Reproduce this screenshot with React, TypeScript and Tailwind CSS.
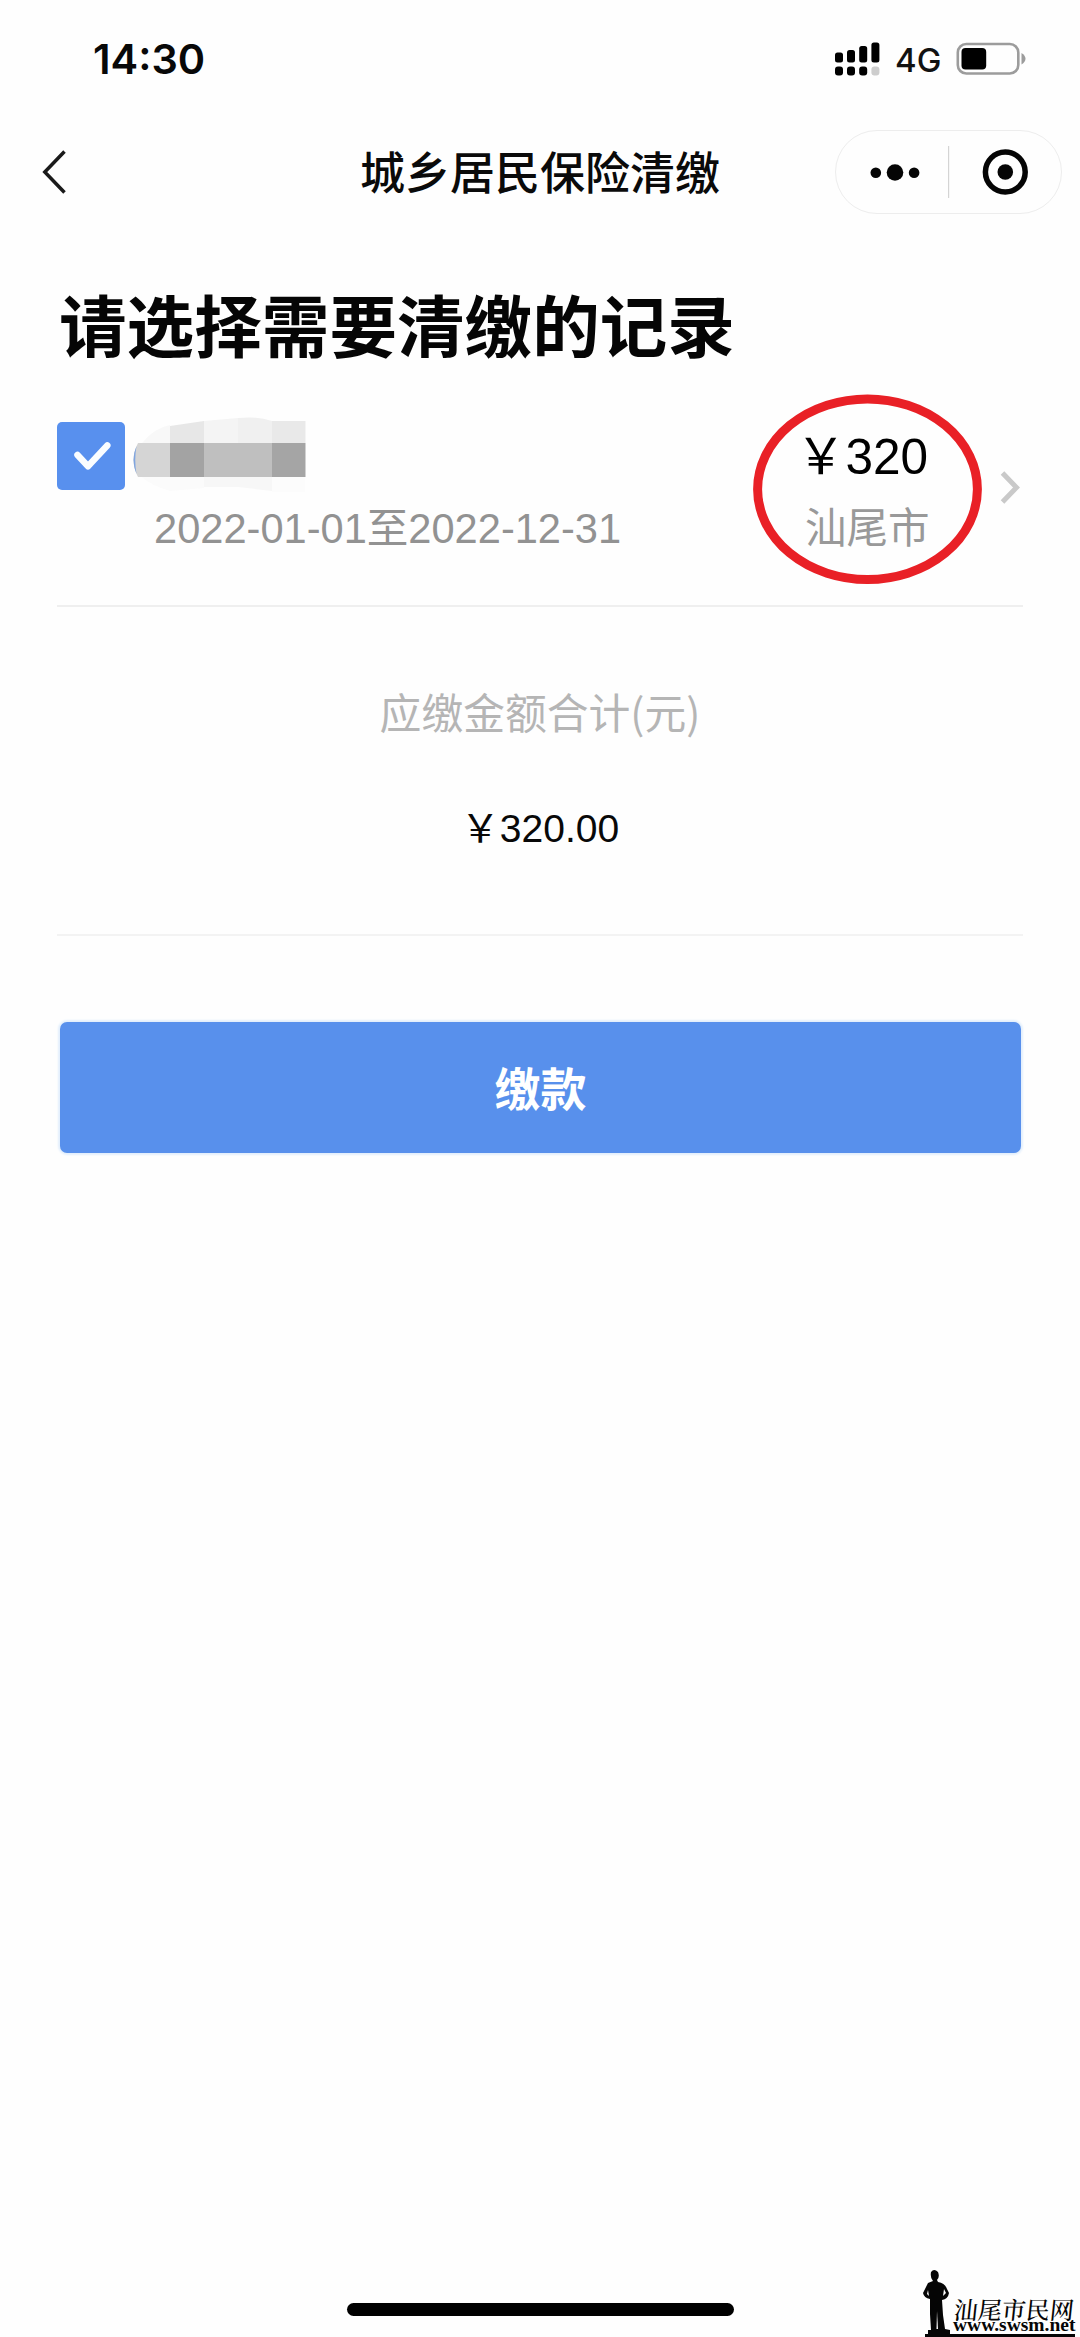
const sans = "font-['Liberation_Sans','Noto_Sans_CJK_SC',sans-serif]";

// Full-width yen sign, one em wide, as used by Chinese price labels.
const YEN = "\uFFE5";

function StatusBar() {
  return (
    <div className="flex h-[118px] items-center pl-[93px] pr-[54px]">
      <span className="pt-[2px] font-['Inter',sans-serif] text-[41.500px] font-semibold leading-none text-[#080808]">14:30</span>
      <div className="ml-auto flex items-center">
        <svg className="h-[34px] w-[46px]" viewBox="0 0 46 34" fill="#000">
          <rect x="1" y="10.5" width="8" height="10" rx="2.5" />
          <rect x="13" y="8" width="8" height="12.5" rx="2.5" />
          <rect x="25.2" y="4" width="8" height="16.5" rx="2.5" />
          <rect x="37.4" y="0.5" width="8" height="20" rx="2.5" />
          <rect x="1" y="24.5" width="8" height="9" rx="3" />
          <rect x="13" y="24.5" width="8" height="9" rx="3" />
          <rect x="25.2" y="24.5" width="8" height="9" rx="3" />
          <rect x="37.4" y="24.5" width="8" height="9" rx="3" fill="#cdcdcd" />
        </svg>
        <span className="ml-[15px] w-[46px] whitespace-nowrap pt-[2px] font-['Inter',sans-serif] text-[33px] font-medium leading-none text-[#111]">4G</span>
        <svg className="ml-[15px] h-[34px] w-[70px]" viewBox="0 0 70 34">
          <rect x="1.8" y="2" width="60.5" height="29.5" rx="8.5" fill="none" stroke="#9c9c9c" strokeWidth="2.6" />
          <rect x="5.5" y="6" width="24.7" height="21.5" rx="4" />
          <path d="M65.5 11Q69.5 13.5 69.5 16.7Q69.5 20 65.5 22.5Z" fill="#9c9c9c" />
        </svg>
      </div>
    </div>
  );
}

function NavBar() {
  return (
    <header className="grid h-[108px] grid-cols-[300px_1fr_300px] items-center">
      <svg className="ml-[40px] h-[48px] w-[30px]" viewBox="0 0 30 48" fill="none" stroke="#1a1a1a" strokeWidth="3.5">
        <path d="M24.500 3.500 4.800 24 24.500 44.500" />
      </svg>
      <h1 className="pt-[5px] text-center text-[45px] font-medium leading-none text-[#0a0a0a]">城乡居民保险清缴</h1>
      <div className="ml-[55px] flex h-[84px] w-[227px] items-center rounded-full border-[1.500px] border-[#ededed]">
        <svg className="h-[52px] w-full" viewBox="0 0 224 52" fill="#050505">
          <circle cx="39.3" cy="26.7" r="5.3" />
          <circle cx="58.5" cy="26.5" r="8.3" />
          <circle cx="77.6" cy="26.7" r="5.3" />
          <rect x="111.5" y="0" width="1.2" height="52" fill="#d4d4d4" />
          <circle cx="168.8" cy="26" r="19.9" fill="none" stroke="#050505" strokeWidth="5.5" />
          <circle cx="168.8" cy="26" r="7.8" />
        </svg>
      </div>
    </header>
  );
}

function RedactedName() {
  return (
    <svg className="ml-[7px] h-[80px] w-[174px]" viewBox="0 0 174 80">
      <path d="M10 27 Q22 12 38 9V27Z" fill="#f8f8f8" />
      <path d="M38 10 72 5V27H38Z" fill="#e7e7e7" />
      <path d="M72 5 106 2V27H72Z" fill="#f4f4f4" />
      <path d="M106 2 Q126 0 140 5V27H106Z" fill="#f0f0f0" />
      <rect x="140" y="5" width="33.5" height="22" fill="#e9e9e9" />
      <path d="M6 27H38V61H6Q-3 44 6 27Z" fill="#d5d5d5" />
      <path d="M4.500 30Q-1.500 44 4.500 58Q2 44 4.500 30Z" fill="#7fa5e0" />
      <rect x="38" y="27" width="34" height="34" fill="#a3a3a3" />
      <rect x="72" y="27" width="68" height="34" fill="#bfbfbf" />
      <rect x="140" y="27" width="33.5" height="34" fill="#a5a5a5" />
      <path d="M10 61H72V72L38 75Q20 70 10 61Z" fill="#fbfbfb" />
      <path d="M72 61H140V75L106 71H72Z" fill="#f7f7f7" />
      <path d="M140 61H173V76H140Z" fill="#fcfcfc" />
    </svg>
  );
}

function RecordRow() {
  return (
    <section className="flex h-[215px] border-b-2 border-[#efefef]">
      <div className="flex-1 pt-[24px]">
        <div className="flex h-[80px] items-center">
          <div className="flex size-[68px] items-center justify-center rounded-[5px] bg-[#5890ee]">
            <svg className="size-[68px]" viewBox="0 0 68 68" fill="none" stroke="#fafdff" strokeWidth="6.5" strokeLinecap="round" strokeLinejoin="round">
              <path d="M20.500 33 31 44.300 50.300 23.500" />
            </svg>
          </div>
          <RedactedName />
        </div>
        <p className="ml-[97px] mt-[3px] whitespace-nowrap text-[41.600px] leading-[60px] text-[#929292]">2022-01-01至2022-12-31</p>
      </div>
      <div className="relative mr-[41px] w-[229px]">
        <p className="whitespace-nowrap pl-[43px] pt-[35px] text-[49.500px] leading-[60px] text-black">{YEN}320</p>
        <p className="pl-[52px] pt-[12px] text-[41.500px] leading-[60px] text-[#999]">汕尾市</p>
        <svg className="absolute left-0 top-0 h-[192px] w-[229px]" viewBox="0 0 229 192" fill="none">
          <ellipse cx="114.5" cy="97.2" rx="109.9" ry="90.3" stroke="#e92026" strokeWidth="9" />
        </svg>
        <svg className="absolute left-[246px] top-[77px] h-[36px] w-[24px]" viewBox="0 0 24 36" fill="none" stroke="#c9c9c9" strokeWidth="5">
          <path d="M3.500 4 17.500 18.500 3.500 33" />
        </svg>
      </div>
    </section>
  );
}

function SiteMark() {
  return (
    <div className="absolute bottom-0 right-0 h-[69px] w-[157px] text-[#050505]">
      <svg className="absolute left-0 top-0 h-[69px] w-[157px]" viewBox="0 0 157 69" fill="currentColor">
        <path d="M8 4Q11 0 15 4Q17 9 14 12L15 14Q22 15 24 21L26 25Q25 31 19 32L20 47 22 61 27 62V66H152V69H2V66H5V62H8L7 46 7 31Q1 30 0 25L5 15 10 13Q7 10 8 4Z" />
        <path d="M5 22 4 26 6 28ZM21 21 20 28 23 25Z" fill="#fff" />
        <path d="M14 43 15 61H13.500Z" fill="#fff" />
      </svg>
      <div className="absolute left-[31px] top-[27px] whitespace-nowrap font-['Noto_Serif_CJK_SC','Noto_Sans_CJK_SC',serif] text-[24px] font-medium leading-[28px] -skew-x-6">汕尾市民网</div>
      <div className="absolute left-[30px] top-[47px] whitespace-nowrap font-['Liberation_Serif',serif] text-[19.500px] font-bold leading-[20px]">www.swsm.net</div>
    </div>
  );
}

export default function App() {
  return (
    <div className={`relative flex h-[2337px] w-[1080px] flex-col overflow-hidden bg-[#fefefe] ${sans}`}>
      <StatusBar />
      <NavBar />
      <main className="px-[57px] pt-[63px]">
        <h2 className="ml-[2px] whitespace-nowrap text-[67.600px] font-bold leading-[80px] text-[#050505]">请选择需要清缴的记录</h2>
        <div className="mt-[23px]">
          <RecordRow />
        </div>
        <section className="flex h-[329px] flex-col items-center border-b-2 border-[#f3f3f3] pt-[74px]">
          <p className="font-['Noto_Sans_CJK_SC',sans-serif] text-[41.800px] leading-[60px] text-[#b5b5b5]">应缴金额合计(元)</p>
          <p className="mt-[58px] text-[39px] leading-[60px] text-[#080808]">{YEN}320.00</p>
        </section>
        <button className="ml-[3px] mt-[86px] h-[131px] w-[961px] rounded-[7px] bg-[#5890ec] pt-[5px] text-[46px] font-bold text-white shadow-[0_0_2px_2px_#e3effc]">缴款</button>
      </main>
      <div className="mx-auto mb-[21px] mt-auto h-[13px] w-[387px] rounded-full bg-black" />
      <SiteMark />
    </div>
  );
}
